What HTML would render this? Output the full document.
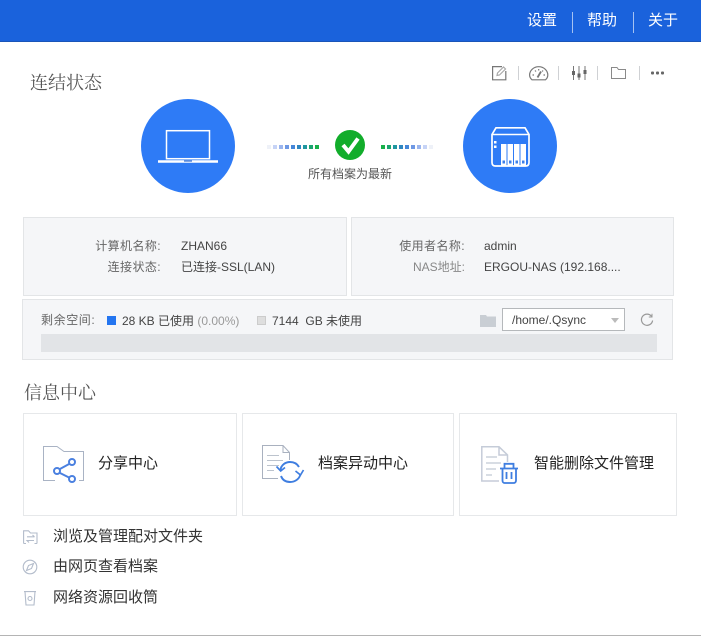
<!DOCTYPE html>
<html lang="zh-CN">
<head>
<meta charset="utf-8">
<style>
html,body{margin:0;padding:0;background:#fff}
body{position:relative;width:701px;height:638px;overflow:hidden;font-family:"Liberation Sans","Noto Sans CJK SC",sans-serif;font-size:12px;color:#333}
.a{position:absolute;white-space:nowrap;line-height:16px}
.box{position:absolute;box-sizing:border-box;background:#f5f6f8;border:1px solid #e3e5e7}
.card{position:absolute;box-sizing:border-box;background:#fff;border:1px solid #e6e8ea;top:413px;height:103px}
.sep{position:absolute;width:1px;background:#cfd1d4;top:66px;height:14px}
.hs{position:absolute;top:12px;width:1px;height:21px;background:#a5c2f2}
.nav{position:absolute;top:12px;color:#fff;font-size:15px;line-height:18px;white-space:nowrap}
.r{text-align:right;letter-spacing:.4px}
svg{position:absolute;overflow:visible}
.cn{font-size:15px;color:#222;line-height:20px}
.link{font-size:15px;color:#333;line-height:20px;left:53px}
</style>
</head>
<body>
<div class="a" style="left:0;top:0;width:701px;height:41px;background:#1a62dc;border-bottom:1px solid #1a55b8"></div>
<div class="nav" style="left:527px">设置</div>
<div class="hs" style="left:572px"></div>
<div class="nav" style="left:587px">帮助</div>
<div class="hs" style="left:633px"></div>
<div class="nav" style="left:648px">关于</div>

<div class="a" style="left:30px;top:72px;font-size:18px;line-height:22px;color:#555;font-family:'Liberation Serif','Noto Serif CJK SC',serif">连结状态</div>

<!-- toolbar -->
<svg style="left:492px;top:66px" width="15" height="15" viewBox="0 0 15 15" fill="none" stroke="#777" stroke-width="1.200"><path d="M10 .6H.6V13.800H13.800V5"/><path d="M5 9.500L5.500 7L11.500 1L13.500 3L7.500 9Z" stroke="#aaa"/></svg>
<div class="sep" style="left:518px"></div>
<svg style="left:529px;top:66px" width="20" height="15" viewBox="0 0 20 15" fill="none" stroke="#777" stroke-width="1.200"><path d="M3 13.800C1.500 12.500 .6 10.800 .6 9A9 8.200 0 0 1 18.800 9C18.800 10.800 18 12.500 16.500 13.800Z"/><path d="M8.500 11.500L12 5.500" stroke-width="1.800"/><path d="M3.500 9H5M6 4.500L7 5.500M9.700 3V4.500M14 4.500L13.200 5.500M14.500 9H16"/></svg>
<div class="sep" style="left:558px"></div>
<svg style="left:572px;top:66px" width="15" height="15" viewBox="0 0 15 15" fill="none" stroke="#777" stroke-width="1"><path d="M1.500 0V14M7 0V14M13 0V14"/><path d="M0 5H3V9H0ZM5.500 7.500H8.500V11.500H5.500ZM11.500 4H14.500V8H11.500Z" fill="#666" stroke="none"/></svg>
<div class="sep" style="left:597px"></div>
<svg style="left:611px;top:67px" width="15" height="12" viewBox="0 0 15 12" fill="none" stroke="#8a8a8a" stroke-width="1"><path d="M.5 .5H6L7.500 2.500H14.500V11.500H.5Z"/></svg>
<div class="sep" style="left:639px"></div>
<svg style="left:651px;top:71px" width="14" height="4" viewBox="0 0 14 4" fill="#666"><rect x="0" y="0.500" width="3" height="3" rx="1"/><rect x="5" y="0.500" width="3" height="3" rx="1"/><rect x="10" y="0.500" width="3" height="3" rx="1"/></svg>

<!-- status graphic -->
<div class="a" style="left:141px;top:99px;width:94px;height:94px;border-radius:50%;background:#2e7bf6"></div>
<svg style="left:158px;top:130px" width="60" height="33" viewBox="0 0 60 33" fill="none" stroke="#fff"><rect x="8.500" y=".7" width="43" height="28" stroke-width="1.500"/><path d="M0 31.500H60" stroke-width="2.500"/><path d="M26 31H34" stroke="#2e6bd0" stroke-width="1.200"/></svg>

<div class="a" style="left:463px;top:99px;width:94px;height:94px;border-radius:50%;background:#2e7bf6"></div>
<svg style="left:491px;top:127px" width="39" height="40" viewBox="0 0 39 40" fill="none"><path d="M5 .8H34L38 7.500V35.500C38 37.800 36.800 39 34.500 39H4.500C2.200 39 1 37.800 1 35.500V7.500Z" stroke="#fff" stroke-width="1.700"/><path d="M1 7.500H38" stroke="#fff" stroke-width="1.500"/><rect x="10" y="17" width="5.500" height="22" fill="#fff"/><rect x="16.500" y="17" width="5.500" height="22" fill="#fff"/><rect x="23" y="17" width="5.500" height="22" fill="#fff"/><rect x="29.500" y="17" width="5.500" height="22" fill="#fff"/><path d="M11.500 35h2.500M18 35h2.500M24.500 35h2.500M31 35h2.500" stroke="#3d7fe8" stroke-width="3"/><rect x="3" y="14" width="2.500" height="2.500" fill="#fff"/><rect x="3" y="18.500" width="2.500" height="2.500" fill="#fff"/></svg>

<svg style="left:266px;top:144px" width="54" height="6" viewBox="0 0 54 6">
<rect x="1" y="1" width="4" height="4" fill="#eef1f8"/><rect x="7" y="1" width="4" height="4" fill="#c6d3f6"/><rect x="13" y="1" width="4" height="4" fill="#9bb5ee"/><rect x="19" y="1" width="4" height="4" fill="#6e98e4"/><rect x="25" y="1" width="4" height="4" fill="#4586d8"/><rect x="31" y="1" width="4" height="4" fill="#2f86c0"/><rect x="37" y="1" width="4" height="4" fill="#1f96a0"/><rect x="43" y="1" width="4" height="4" fill="#1ba570"/><rect x="49" y="1" width="4" height="4" fill="#18b04a"/></svg>
<svg style="left:380px;top:144px" width="54" height="6" viewBox="0 0 54 6">
<rect x="1" y="1" width="4" height="4" fill="#18b04a"/><rect x="7" y="1" width="4" height="4" fill="#1ba570"/><rect x="13" y="1" width="4" height="4" fill="#1f96a0"/><rect x="19" y="1" width="4" height="4" fill="#2f86c0"/><rect x="25" y="1" width="4" height="4" fill="#4586d8"/><rect x="31" y="1" width="4" height="4" fill="#6e98e4"/><rect x="37" y="1" width="4" height="4" fill="#9bb5ee"/><rect x="43" y="1" width="4" height="4" fill="#c6d3f6"/><rect x="49" y="1" width="4" height="4" fill="#eef1f8"/></svg>

<svg style="left:335px;top:130px" width="30" height="30" viewBox="0 0 30 30"><circle cx="15" cy="15" r="15" fill="#12ad2b"/><path d="M8 15L13.500 21.500L23 8.500" fill="none" stroke="#fff" stroke-width="4"/></svg>
<div class="a" style="left:308px;top:166px;color:#555">所有档案为最新</div>

<!-- info boxes -->
<div class="box" style="left:23px;top:217px;width:324px;height:79px"></div>
<div class="box" style="left:351px;top:217px;width:323px;height:79px"></div>
<div class="a r" style="left:60px;width:101px;top:238px;color:#666">计算机名称:</div>
<div class="a r" style="left:60px;width:101px;top:259px;color:#666">连接状态:</div>
<div class="a" style="left:181px;top:238px;color:#444">ZHAN66</div>
<div class="a" style="left:181px;top:259px;color:#444">已连接-SSL(LAN)</div>
<div class="a r" style="left:360px;width:105px;top:238px;color:#666">使用者名称:</div>
<div class="a r" style="left:360px;width:105px;top:259px;color:#888;letter-spacing:0">NAS地址:</div>
<div class="a" style="left:484px;top:238px;color:#444">admin</div>
<div class="a" style="left:484px;top:259px;color:#444">ERGOU-NAS (192.168....</div>

<!-- storage -->
<div class="box" style="left:22px;top:299px;width:651px;height:61px"></div>
<div class="a" style="left:41px;top:312px;color:#666;letter-spacing:.6px">剩余空间:</div>
<div class="a" style="left:107px;top:316px;width:9px;height:9px;background:#2475f0"></div>
<div class="a" style="left:122px;top:313px;color:#444">28 KB 已使用 <span style="color:#999">(0.00%)</span></div>
<div class="a" style="left:257px;top:316px;width:9px;height:9px;box-sizing:border-box;background:#dedede;border:1px solid #ccc"></div>
<div class="a" style="left:272px;top:313px;color:#444">7144&nbsp; GB 未使用</div>
<svg style="left:480px;top:314px" width="16" height="13" viewBox="0 0 16 13"><path d="M0 1H6L7 2.500H16V13H0Z" fill="#c9ced4"/></svg>
<div class="a" style="left:502px;top:308px;width:123px;height:23px;box-sizing:border-box;background:#fff;border:1px solid #b5b8bb"></div>
<div class="a" style="left:512px;top:312px;color:#444">/home/.Qsync</div>
<svg style="left:611px;top:318px" width="8" height="5" viewBox="0 0 8 5"><path d="M0 0H8L4 5Z" fill="#bbb"/></svg>
<svg style="left:640px;top:313px" width="14" height="14" viewBox="0 0 14 14" fill="none" stroke="#999" stroke-width="1.200"><path d="M11.500 3.300A5.600 5.600 0 1 0 12.600 7.500"/><path d="M12 .8V4H8.800" stroke-width="1"/></svg>
<div class="a" style="left:41px;top:334px;width:616px;height:18px;background:#e2e4e7"></div>

<div class="a" style="left:24px;top:382px;font-size:18px;line-height:22px;color:#555;font-family:'Liberation Serif','Noto Serif CJK SC',serif">信息中心</div>

<!-- cards -->
<div class="card" style="left:23px;width:214px"></div>
<div class="card" style="left:242px;width:212px"></div>
<div class="card" style="left:459px;width:218px"></div>

<!-- share -->
<svg style="left:43px;top:446px" width="42" height="38" viewBox="0 0 42 38" fill="none"><path d="M12 34.500H.5V.5H14L21 5.500H40.500V34.500H36" stroke="#a9b3c4" stroke-width="1"/><path d="M16 23.500L27 17.500M16 26.500L27 32" stroke="#4a80e0" stroke-width="1.900"/><circle cx="14" cy="25" r="3" fill="#fff" stroke="#4a80e0" stroke-width="2"/><circle cx="29" cy="16" r="3" fill="#fff" stroke="#4a80e0" stroke-width="2"/><circle cx="29" cy="33" r="3" fill="#fff" stroke="#4a80e0" stroke-width="2"/></svg>
<div class="a cn" style="left:98px;top:454px">分享中心</div>

<!-- sync -->
<svg style="left:262px;top:445px" width="42" height="40" viewBox="0 0 42 40" fill="none"><path d="M16 33.500H.5V.5H21L27.500 7.500V15M21 .5V7.500H27.500" stroke="#a9b1bf"/><path d="M5 10.500H17M5 15.500H21M5 20.500H17M5 25.500H12" stroke="#bcc3cd"/><path d="M18.500 25C19 20 23.500 17 28 17C32 17 35 18.500 37 22" stroke="#3f7ee0" stroke-width="1.900"/><path d="M38.500 29C37.500 34 33 37 28 37C24 37 20.500 35 19 31" stroke="#3f7ee0" stroke-width="1.900"/><path d="M14.500 21.500L18.700 26L23 22.500M33.500 26L38.500 30L41.500 25" stroke="#3f7ee0" stroke-width="1.700"/></svg>
<div class="a cn" style="left:318px;top:454px">档案异动中心</div>

<!-- trash -->
<svg style="left:481px;top:446px" width="40" height="38" viewBox="0 0 40 38" fill="none"><path d="M18 35H.8V.8H18L26.500 9V16M18 .8V9H26.500" stroke="#c5ccd8" stroke-width="1.500"/><path d="M5 11H16M5 17H20M5 23H15M5 29H11" stroke="#ccd2dc" stroke-width="1.500"/><path d="M19 22.500H37M23.500 22.500V17.800H32.500V22.500M21.500 22.500V34.500C21.500 36 22.500 37 23.500 37H32.500C34 37 35 36 35 34.500V22.500" stroke="#3f7ee0" stroke-width="1.800"/><path d="M25.500 26V33M30.500 26V33" stroke="#3f7ee0" stroke-width="1.800"/></svg>
<div class="a cn" style="left:534px;top:454px;">智能删除文件管理</div>

<!-- links -->
<svg style="left:23px;top:530px" width="15" height="15" viewBox="0 0 15 15" fill="none" stroke="#b3bccb" stroke-width="1.100"><path d="M.6 13.500V.8H5.500L7.500 3H14V13.500M.6 13.500H3M11.500 13.500H14"/><path d="M4 6.800H11.500M9.500 5L11.500 6.800M11 10.500H4L6 12.500"/></svg>
<div class="a link" style="top:527px">浏览及管理配对文件夹</div>
<svg style="left:22px;top:559px" width="16" height="16" viewBox="0 0 16 16" fill="none" stroke="#b3bccb" stroke-width="1.100"><circle cx="8" cy="8" r="6.800"/><path d="M11.500 4.500L9.500 9.500L4.500 11.500L6.500 6.500Z"/></svg>
<div class="a link" style="top:557px">由网页查看档案</div>
<svg style="left:24px;top:591px" width="12" height="15" viewBox="0 0 12 15" fill="none" stroke="#b3bccb" stroke-width="1.100"><path d="M0 .6H12M1 .6L2 14H10L11 .6"/><circle cx="6" cy="7.500" r="2"/></svg>
<div class="a link" style="top:588px">网络资源回收筒</div>

<div class="a" style="left:0;top:635px;width:701px;height:1px;background:#b4b4b4"></div>
</body>
</html>
